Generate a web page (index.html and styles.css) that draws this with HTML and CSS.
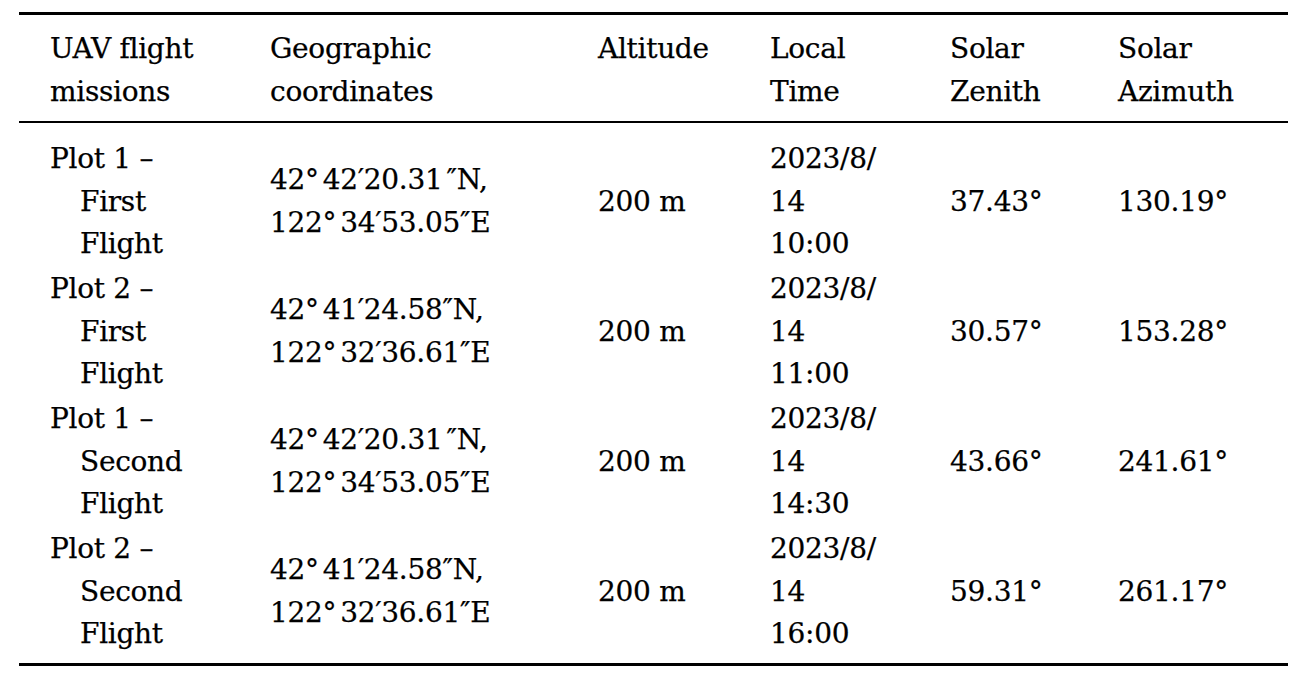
FILE: index.html
```html
<!DOCTYPE html>
<html lang="en">
<head>
<meta charset="utf-8">
<title>UAV flight missions</title>
<link rel="stylesheet" href="styles.css">
</head>
<body>
<table class="data">
  <colgroup>
    <col class="c1"><col class="c2"><col class="c3"><col class="c4"><col class="c5"><col class="c6">
  </colgroup>
  <thead>
    <tr>
      <th>UAV flight<br>missions</th>
      <th>Geographic<br>coordinates</th>
      <th>Altitude</th>
      <th>Local<br>Time</th>
      <th>Solar<br>Zenith</th>
      <th>Solar<br>Azimuth</th>
    </tr>
  </thead>
  <tbody>
    <tr>
      <td><div>Plot 1 –</div><div class="ind">First</div><div class="ind">Flight</div></td>
      <td class="geo">42°<span class="ts"></span>42′20.31<span class="ts"></span>″N,<br>122°<span class="ts"></span>34′53.05″E</td>
      <td>200 m</td>
      <td>2023/8/<br>14<br>10:00</td>
      <td>37.43°</td>
      <td>130.19°</td>
    </tr>
    <tr>
      <td><div>Plot 2 –</div><div class="ind">First</div><div class="ind">Flight</div></td>
      <td class="geo">42°<span class="ts"></span>41′24.58″N,<br>122°<span class="ts"></span>32′36.61″E</td>
      <td>200 m</td>
      <td>2023/8/<br>14<br>11:00</td>
      <td>30.57°</td>
      <td>153.28°</td>
    </tr>
    <tr>
      <td><div>Plot 1 –</div><div class="ind">Second</div><div class="ind">Flight</div></td>
      <td class="geo">42°<span class="ts"></span>42′20.31<span class="ts"></span>″N,<br>122°<span class="ts"></span>34′53.05″E</td>
      <td>200 m</td>
      <td>2023/8/<br>14<br>14:30</td>
      <td>43.66°</td>
      <td>241.61°</td>
    </tr>
    <tr>
      <td><div>Plot 2 –</div><div class="ind">Second</div><div class="ind">Flight</div></td>
      <td class="geo">42°<span class="ts"></span>41′24.58″N,<br>122°<span class="ts"></span>32′36.61″E</td>
      <td>200 m</td>
      <td>2023/8/<br>14<br>16:00</td>
      <td>59.31°</td>
      <td>261.17°</td>
    </tr>
  </tbody>
</table>
</body>
</html>
```

FILE: styles.css
```css
html, body {
  margin: 0;
  padding: 0;
  background: #ffffff;
}

body {
  font-family: "DejaVu Serif", "Liberation Serif", serif;
  font-size: 28px;
  color: #000;
  -webkit-text-stroke: 0.25px #000;
}

.data {
  margin: 12px 0 0 19px;
  width: 1269px;
  table-layout: fixed;
  border-collapse: separate;
  border-spacing: 0;
  line-height: 42.5px;
  letter-spacing: -0.3px;
}

.c1 { width: 220px; }
.c2 { width: 328px; }
.c3 { width: 172px; }
.c4 { width: 180px; }
.c5 { width: 168px; }
.c6 { width: 201px; }

.data th,
.data td {
  padding: 1.25px 0 1.25px 31px;
  text-align: left;
  white-space: nowrap;
}

.data th {
  font-weight: normal;
  vertical-align: top;
  padding-top: 13px;
  padding-bottom: 8px;
  border-top: 3px solid #000;
  border-bottom: 2px solid #000;
}

.data td {
  vertical-align: middle;
}

.data tbody tr:first-child td {
  padding-top: 15px;
}

.data tbody tr:last-child td {
  padding-bottom: 7.5px;
  border-bottom: 3px solid #000;
}

.ind {
  padding-left: 30px;
}

.ts {
  display: inline-block;
  width: 4px;
}
```
